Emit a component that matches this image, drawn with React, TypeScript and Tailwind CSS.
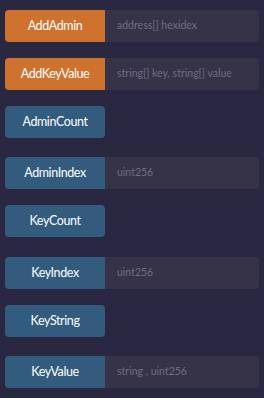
import React from "react";

type Row = { name: string; kind: "orange" | "blue"; param?: string; mb: string };

const rows: Row[] = [
  { name: "AddAdmin", kind: "orange", param: "address[] hexidex", mb: "mb-4" },
  { name: "AddKeyValue", kind: "orange", param: "string[] key, string[] value", mb: "mb-4" },
  { name: "AdminCount", kind: "blue", mb: "mb-[19px]" },
  { name: "AdminIndex", kind: "blue", param: "uint256", mb: "mb-4" },
  { name: "KeyCount", kind: "blue", mb: "mb-5" },
  { name: "KeyIndex", kind: "blue", param: "uint256", mb: "mb-4" },
  { name: "KeyString", kind: "blue", mb: "mb-[19px]" },
  { name: "KeyValue", kind: "blue", param: "string , uint256", mb: "mb-4" },
];

export default function App() {
  return (
    <div
      className="w-[264px] h-[398px] bg-[#2a2740] pt-[10px] pl-[5px] pr-[5px] overflow-hidden"
      style={{ fontFamily: 'Lato, "Noto Sans", sans-serif' }}
    >
      {rows.map((r) => (
        <div key={r.name} className={`flex h-[32px] ${r.mb}`}>
          <button
            className={
              (r.kind === "orange" ? "bg-[#cf7230] " : "bg-[#325b7e] ") +
              (r.param ? "rounded-l-[4px] " : "rounded-[4px] ") +
              "w-[100px] h-[32px] flex items-center justify-center text-white text-[12.5px] tracking-[-0.4px] shrink-0"
            }
          >
            {r.name}
          </button>
          {r.param && (
            <div className="flex-1 h-[32px] bg-[#363349] rounded-r-[4px] flex items-center pl-3 text-[10.5px] text-[#6f6c84]">
              {r.param}
            </div>
          )}
        </div>
      ))}
    </div>
  );
}
